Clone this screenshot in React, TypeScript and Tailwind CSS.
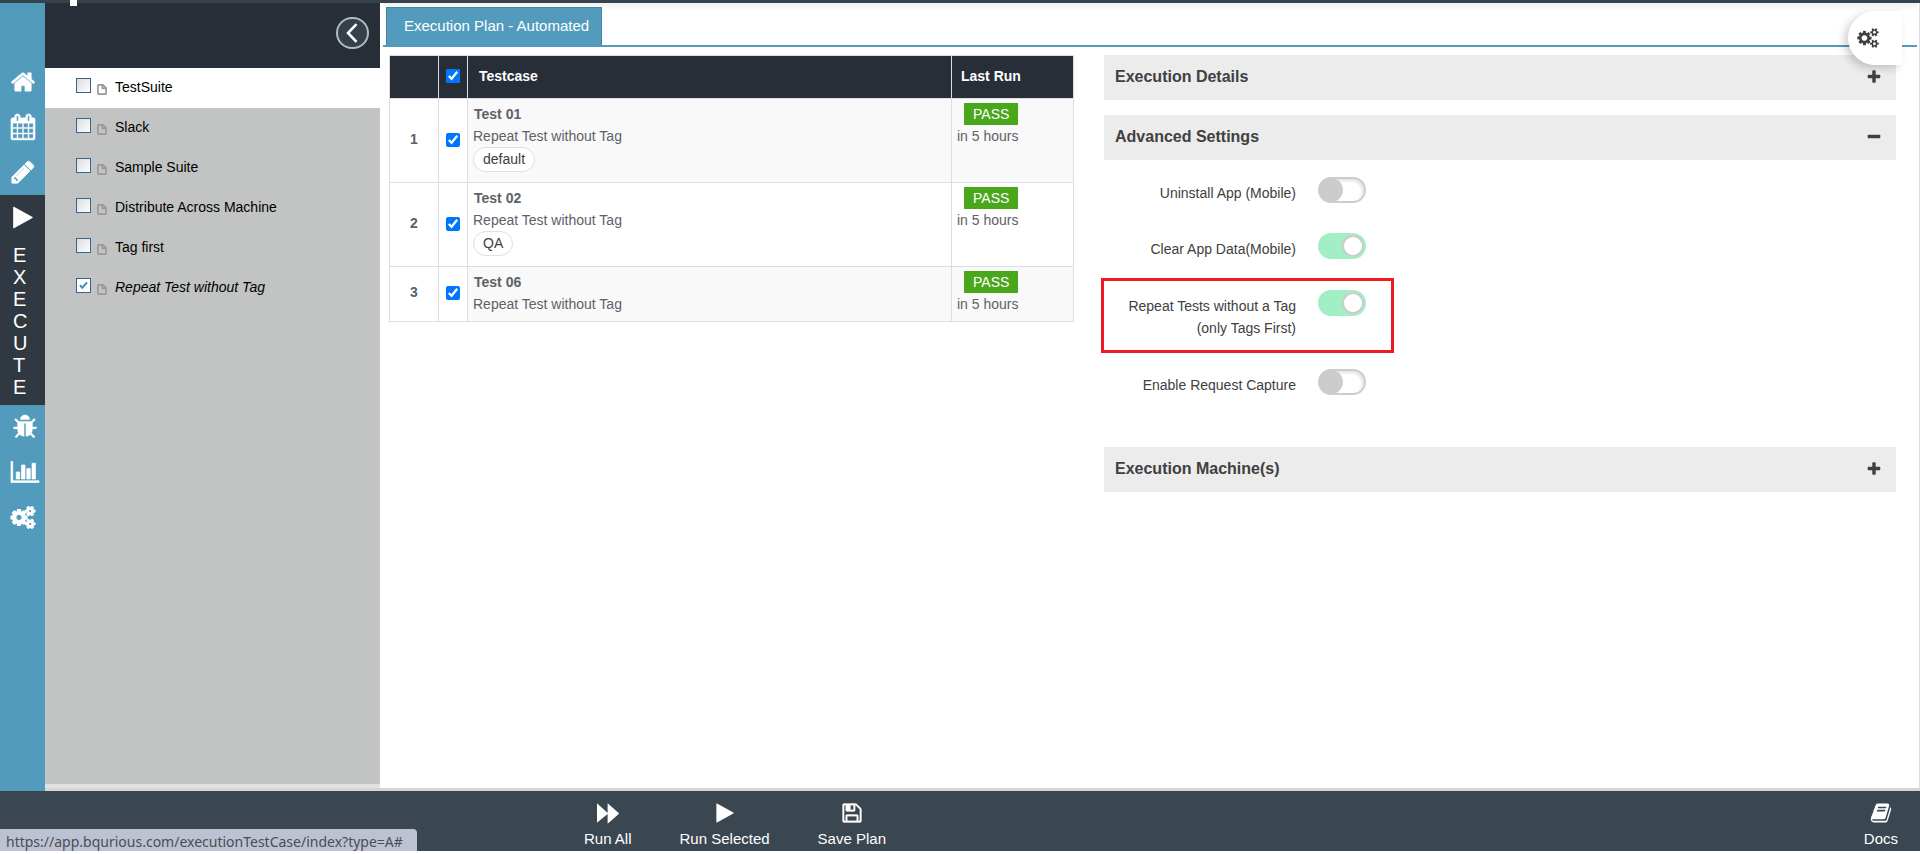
import React, { useState } from "react";

type Glyph = { w: number; d: string; stroke?: number };

const SMALL_GEAR =
  "v140q0 16-149 31-12 27-30 52 51 113 51 138 0 4-4 7-122 71-124 71-8 0-46-47t-52-68q-20 2-30 2t-30-2q-14 21-52 68t-46 47q-2 0-124-71-4-3-4-7 0-25 51-138-18-25-30-52-149-15-149-31v-140q0-16 149-31 13-29 30-52-51-113-51-138 0-4 4-7 4-2 35-20t59-34 30-16q8 0 46 46.5t52 67.5q20-2 30-2t30 2q51-71 92-112l6-2q4 0 124 70 4 3 4 7 0 25-51 138 17 23 30 52 149 15 149 31z";

const GEARS =
  "M896 896q0-106-75-181t-181-75-181 75-75 181 75 181 181 75 181-75 75-181zm768 512q0-52-38-90t-90-38-90 38-38 90q0 53 37.5 90.5t90.5 37.5 90.5-37.5 37.5-90.5zm0-1024q0-52-38-90t-90-38-90 38-38 90q0 53 37.5 90.5t90.5 37.5 90.5-37.5 37.5-90.5zm-384 421v185q0 10-7 19.5t-16 10.5l-155 24q-11 35-32 76 34 48 90 115 7 11 7 20 0 12-7 19-23 30-82.5 89.5t-78.5 59.5q-11 0-21-7l-115-90q-37 19-77 31-11 108-23 155-7 24-30 24h-186q-11 0-20-7.5t-10-17.5l-23-153q-34-10-75-31l-118 89q-7 7-20 7-11 0-21-8-144-133-144-160 0-9 7-19 10-14 41-53t47-61q-23-44-35-82l-152-24q-10-1-17-9.5t-7-19.5v-185q0-10 7-19.5t16-10.5l155-24q11-35 32-76-34-48-90-115-7-11-7-20 0-12 7-20 22-30 82-89t79-59q11 0 21 7l115 90q34-18 77-32 11-108 23-154 7-24 30-24h186q11 0 20 7.5t10 17.5l23 153q34 10 75 31l118-89q8-7 20-7 11 0 21 8 144 133 144 160 0 8-7 19-12 16-42 54t-45 60q23 48 34 82l152 23q10 2 17 10.5t7 19.5zM1920 1338" +
  SMALL_GEAR +
  "M1920 314" +
  SMALL_GEAR;

const GLYPHS: Record<string, Glyph> = {
  home: {
    w: 1792,
    d: "M1472 992v480q0 26-19 45t-45 19h-384v-384h-256v384h-384q-26 0-45-19t-19-45v-480q0-1 .5-3t.5-3l575-474 575 474q1 2 1 6zm223-69l-62 74q-8 9-21 11h-3q-13 0-21-7l-692-577-692 577q-12 8-24 7-13-2-21-11l-62-74q-8-10-7-23.5t11-21.5l719-599q32-26 76-26t76 26l244 204v-195q0-14 9-23t23-9h192q14 0 23 9t9 23v408l219 182q10 8 11 21.5t-7 23.5z",
    stroke: 30,
  },
  calendar: {
    w: 1792,
    d: "M192 1664h288v-288h-288v288zm352 0h320v-288h-320v288zm-352-352h288v-320h-288v320zm352 0h320v-320h-320v320zm-352-384h288v-288h-288v288zm736 736h320v-288h-320v288zm-384-736h320v-288h-320v288zm768 736h288v-288h-288v288zm-384-352h320v-320h-320v320zm-352-864v-288q0-13-9.5-22.5t-22.5-9.5h-64q-13 0-22.5 9.5t-9.5 22.5v288q0 13 9.5 22.5t22.5 9.5h64q13 0 22.5-9.5t9.5-22.5zm736 864h288v-320h-288v320zm-384-384h320v-288h-320v288zm384 0h288v-288h-288v288zm32-480v-288q0-13-9.5-22.5t-22.5-9.5h-64q-13 0-22.5 9.5t-9.5 22.5v288q0 13 9.5 22.5t22.5 9.5h64q13 0 22.5-9.5t9.5-22.5zm384-64v1280q0 52-38 90t-90 38h-1408q-52 0-90-38t-38-90v-1280q0-52 38-90t90-38h128v-96q0-66 47-113t113-47h64q66 0 113 47t47 113v96h384v-96q0-66 47-113t113-47h64q66 0 113 47t47 113v96h128q52 0 90 38t38 90z",
    stroke: 30,
  },
  pencil: {
    w: 1792,
    d: "M491 1536l91-91-235-235-91 91v107h128v128h107zm523-928q0-22-22-22-10 0-17 7l-542 542q-7 7-7 17 0 22 22 22 10 0 17-7l542-542q7-7 7-17zm-54-192l416 416-832 832h-416v-416zm683 96q0 53-37 90l-166 166-416-416 166-165q36-38 90-38 53 0 91 38l235 234q37 39 37 91z",
    stroke: 50,
  },
  play: {
    w: 1792,
    d: "M1576 927l-1328 738q-23 13-39.5 3t-16.5-36v-1472q0-26 16.5-36t39.5 3l1328 738q23 13 23 31t-23 31z",
  },
  bug: {
    w: 1792,
    d: "M1696 960q0 26-19 45t-45 19h-224q0 171-67 290l208 209q19 19 19 45t-19 45q-18 19-45 19t-45-19l-198-197q-5 5-15 13t-42 28.5-65 36.5-82 29-97 13v-896h-128v896q-51 0-101.5-13.5t-87-33-66-39-43.5-32.5l-15-14-183 207q-20 21-48 21-24 0-43-16-19-18-20.5-44.5t15.5-46.5l202-227q-58-114-58-274h-224q-26 0-45-19t-19-45 19-45 45-19h224v-294l-173-173q-19-19-19-45t19-45 45-19 45 19l173 173h844l173-173q19-19 45-19t45 19 19 45-19 45l-173 173v294h224q26 0 45 19t19 45zm-480-576h-640q0-133 93.5-226.5t226.5-93.5 226.5 93.5 93.5 226.5z",
    stroke: 30,
  },
  chart: {
    w: 2048,
    d: "M640 896v512h-256v-512h256zm384-512v1024h-256v-1024h256zm1024 1152v128h-2048v-1536h128v1408h1920zm-640-896v768h-256v-768h256zm384-384v1152h-256v-1152h256z",
    stroke: 50,
  },
  cogs: { w: 1920, d: GEARS },
  cogsBold: { w: 1920, d: GEARS, stroke: 90 },
  save: {
    w: 1792,
    d: "M512 1536h768v-384h-768v384zm896 0h128v-896q0-14-10-38.5t-20-34.5l-281-281q-10-10-34-20t-39-10v416q0 40-28 68t-68 28h-576q-40 0-68-28t-28-68v-416h-128v1280h128v-416q0-40 28-68t68-28h832q40 0 68 28t28 68v416zm-384-928v-320q0-13-9.5-22.5t-22.5-9.5h-192q-13 0-22.5 9.5t-9.5 22.5v320q0 13 9.5 22.5t22.5 9.5h192q13 0 22.5-9.5t9.5-22.5zm640 32v928q0 40-28 68t-68 28h-1344q-40 0-68-28t-28-68v-1344q0-40 28-68t68-28h928q40 0 88 20t76 48l280 280q28 28 48 76t20 88z",
    stroke: 30,
  },
  book: {
    w: 1792,
    d: "M1703 478q40 57 18 129l-275 906q-19 64-76.5 107.5t-122.5 43.5h-923q-77 0-148.5-53.5t-99.5-131.5q-24-67-2-127 0-4 3-27t4-37q1-8-3-21.5t-3-19.5q2-11 8-21t16.5-23.5 16.5-23.5q23-38 45-91.5t30-91.5q3-10 .5-30t-.5-28q3-11 17-28t17-23q21-36 42-92t25-90q1-9-2.5-32t.5-28q4-13 22-30.5t22-22.5q19-26 42.5-84.5t27.5-96.5q1-8-3-25.5t-2-26.5q2-8 9-18t18-23 17-21q8-12 16.5-30.5t15-35 16-36 19.5-32 26.5-23.5 36-11.5 47.5 5.5l-1 3q38-9 51-9h761q74 0 114 56t18 130l-274 906q-36 119-71.5 153.5t-128.5 34.5h-869q-27 0-38 15-11 16-1 43 24 70 144 70h923q29 0 56-15.5t35-41.5l300-987q7-22 5-57 38 15 59 43zm-1064 2q-4 13 2 22.5t20 9.5h608q13 0 25.5-9.5t16.5-22.5l21-64q4-13-2-22.5t-20-9.5h-608q-13 0-25.5 9.5t-16.5 22.5zm-83 256q-4 13 2 22.5t20 9.5h608q13 0 25.5-9.5t16.5-22.5l21-64q4-13-2-22.5t-20-9.5h-608q-13 0-25.5 9.5t-16.5 22.5z",
  },
  plus: {
    w: 1792,
    d: "M1600 736v192q0 40-28 68t-68 28h-416v416q0 40-28 68t-68 28h-192q-40 0-68-28t-28-68v-416h-416q-40 0-68-28t-28-68v-192q0-40 28-68t68-28h416v-416q0-40 28-68t68-28h192q40 0 68 28t28 68v416h416q40 0 68 28t28 68z",
  },
  minus: {
    w: 1792,
    d: "M1600 736v192q0 40-28 68t-68 28h-1216q-40 0-68-28t-28-68v-192q0-40 28-68t68-28h1216q40 0 68 28t28 68z",
  },
  forward: {
    w: 1792,
    d: "M45 1651q-19 19-32 13t-13-32v-1472q0-26 13-32t32 13l820 755v-736q0-26 13-32t32 13l860 755q19 19 19 45t-19 45l-860 755q-19 19-32 13t-13-32v-736z",
  },
};

function Icon({ name, className }: { name: string; className: string }) {
  const g = GLYPHS[name];
  return (
    <svg
      viewBox={`0 0 ${g.w} 1792`}
      className={className}
      fill="currentColor"
      stroke={g.stroke ? "currentColor" : "none"}
      strokeWidth={g.stroke}
      overflow="visible"
      aria-hidden="true"
    >
      <path d={g.d} />
    </svg>
  );
}

function NavLink({ name, label, size }: { name: string; label: string; size: string }) {
  return (
    <a href="#" aria-label={label} className="flex h-[45px] items-center justify-center pb-px text-white">
      <Icon name={name} className={size} />
    </a>
  );
}

function SideNav() {
  return (
    <nav className="flex w-[45px] shrink-0 flex-col bg-[#529bbd] pt-[57px]">
      <NavLink name="home" label="Home" size="h-[26px] w-[26px]" />
      <NavLink name="calendar" label="Plan" size="h-[26px] w-[26px]" />
      <NavLink name="pencil" label="Author" size="h-[26px] w-[26px]" />
      <a href="#" className="flex h-[210px] flex-col bg-[#303941] pt-[10px] pl-[10px] text-white">
        <Icon name="play" className="h-[25px] w-[26px]" />
        <span className="mt-[14px] w-5 pl-[3px] text-[20px] leading-[22px] break-all">EXECUTE</span>
      </a>
      <div className="pl-1">
        <NavLink name="bug" label="Defects" size="h-[26px] w-[26px]" />
      </div>
      <div className="pl-1">
        <NavLink name="chart" label="Reports" size="h-[26px] w-7" />
      </div>
      <NavLink name="cogsBold" label="Settings" size="h-[23px] w-6" />
    </nav>
  );
}

const SUITES = ["TestSuite", "Slack", "Sample Suite", "Distribute Across Machine", "Tag first", "Repeat Test without Tag"];

function SuiteRow({ name, index }: { name: string; index: number }) {
  const [checked, setChecked] = useState(index === 5);
  return (
    <li className={index === 0 ? "bg-white" : ""}>
      <label className="flex h-10 items-center pl-[31px] text-[14px] text-black">
        <span className="relative mb-[5px] h-[15px] w-[15px]">
          <input
            type="checkbox"
            checked={checked}
            onChange={() => setChecked(!checked)}
            className="block h-[15px] w-[15px] appearance-none border border-[#336592] bg-linear-to-br from-[#dcdcdc] to-white checked:from-white"
          />
          {checked && (
            <svg viewBox="0 0 15 15" className="pointer-events-none absolute inset-0 h-[15px] w-[15px]" fill="none" stroke="#3a8fb7" strokeWidth="2">
              <path d="M4 7.2l2.2 2.6L11 4.5" />
            </svg>
          )}
        </span>
        <svg viewBox="0 0 10 11" className="mt-[2px] ml-[6px] h-[11px] w-[10px] text-[#999]" fill="none" stroke="currentColor" strokeWidth="1.7" aria-hidden="true">
          <path d="M1.9.9h4l3.200 3.300v5q0 1-1 1H1.900q-1 0-1-1V1.900q0-1 1-1z" />
          <path d="M5.400.9v3.500h3.700" />
        </svg>
        <span className={index === 5 ? "ml-2 pb-[2px] italic" : "ml-2 pb-[2px]"}>{name}</span>
      </label>
    </li>
  );
}

function SuitePanel() {
  return (
    <aside className="flex w-[335px] shrink-0 flex-col bg-[#c2c4c3]">
      <div className="flex h-[65px] shrink-0 items-start justify-end bg-[#272e37] pt-[14px] pr-[11px]">
        <button type="button" aria-label="Collapse" className="flex h-8 w-[33px] items-center justify-center rounded-full border-2 border-[#b5b9bc] bg-[#34404a]">
          <svg viewBox="0 0 12 20" className="mr-[2px] h-5 w-3" fill="none" stroke="#fff" strokeWidth="2.6">
            <path d="M10.500 1.200L2 10l8.500 8.800" />
          </svg>
        </button>
      </div>
      <ul className="flex-1">
        {SUITES.map((s, i) => (
          <SuiteRow key={s} name={s} index={i} />
        ))}
      </ul>
      <div className="h-1 bg-[#e0e1e0]" />
    </aside>
  );
}

const TESTS = [
  { name: "Test 01", suite: "Repeat Test without Tag", tag: "default" },
  { name: "Test 02", suite: "Repeat Test without Tag", tag: "QA" },
  { name: "Test 06", suite: "Repeat Test without Tag", tag: "" },
];

function TestTable() {
  return (
    <table className="w-full table-fixed border-collapse border border-[#dcdee6] text-[14px] leading-[22px] text-[#5e6166]">
      <colgroup>
        <col className="w-[49px]" />
        <col className="w-[29px]" />
        <col />
        <col className="w-[122px]" />
      </colgroup>
      <thead>
        <tr className="h-[43px] bg-[#272e37] text-left text-white">
          <th className="border border-[#dcdee6]" />
          <th className="border border-[#dcdee6] pb-[2px] text-center">
            <input type="checkbox" defaultChecked aria-label="Select all" className="mx-auto block h-[14px] w-[14px] accent-[#0075ff]" />
          </th>
          <th className="border border-[#dcdee6] pb-[2px] pl-[11px]">Testcase</th>
          <th className="border border-[#dcdee6] pb-[2px] pl-[9px]">Last Run</th>
        </tr>
      </thead>
      <tbody>
        {TESTS.map((t, i) => (
          <tr key={t.name}>
            <th className="border border-[#dcdee6] pb-1 text-center">{i + 1}</th>
            <td className="border border-[#dcdee6] pb-[2px]">
              <input type="checkbox" defaultChecked aria-label={t.name} className="mx-auto block h-[14px] w-[14px] accent-[#0075ff]" />
            </td>
            <td className={`border border-[#dcdee6] px-[5px] pt-1 pb-[6px] align-top ${i % 2 ? "" : "bg-[#f9f9f9]"}`}>
              <div className="pl-px font-bold">{t.name}</div>
              <div>{t.suite}</div>
              {t.tag && (
                <div className="pb-1">
                  <span className="block w-fit rounded-full border border-[#dddfe2] bg-white px-[9px] pb-px leading-[22px] text-[#404040]">{t.tag}</span>
                </div>
              )}
            </td>
            <td className={`border border-[#dcdee6] px-[5px] pt-1 align-top ${i % 2 ? "" : "bg-[#f9f9f9]"}`}>
              <span className="ml-[7px] block w-fit bg-[#48a71b] px-[9px] text-white">PASS</span>
              <div>in 5 hours</div>
            </td>
          </tr>
        ))}
      </tbody>
    </table>
  );
}

function SectionBar({ title, open }: { title: string; open?: boolean }) {
  return (
    <h2>
      <button type="button" aria-expanded={!!open} className="flex h-[45px] w-full items-center justify-between bg-[#ececec] pr-[14px] pb-[2px] pl-[11px] text-[16px] font-bold text-[#404040]">
        {title}
        <Icon name={open ? "minus" : "plus"} className="h-4 w-4" />
      </button>
    </h2>
  );
}

function ToggleRow({ id, label, note, on, marked }: { id: string; label: string; note?: string; on?: boolean; marked?: boolean }) {
  return (
    <div className={`flex items-start gap-[22px] text-[14px] leading-[22px] text-[#404040] ${marked ? "-mt-[11px] mb-4 -ml-[3px] w-[293px] border-3 border-[#ed1c24] pt-[9px] pb-[11px]" : "mb-[30px] h-[26px] w-[290px]"}`}>
      <label htmlFor={id} className="w-[192px] shrink-0 pt-[5px] text-right">
        {label}
        {note && <span className="block">{note}</span>}
      </label>
      <input
        id={id}
        type="checkbox"
        role="switch"
        defaultChecked={on}
        className="relative h-[26px] w-12 appearance-none rounded-full border-2 border-[#ccc] bg-white shadow-[inset_-2px_2px_3px_#e4e4e4] before:absolute before:-top-px before:-left-px before:h-6 before:w-6 before:rounded-full before:bg-[#ccc] checked:border-[#a2efc5] checked:bg-[#a2efc5] checked:shadow-none checked:before:top-0 checked:before:left-[22px] checked:before:h-[22px] checked:before:w-[22px] checked:before:border-2 checked:before:border-[#ccc] checked:before:bg-white"
      />
    </div>
  );
}

function Settings() {
  return (
    <section className="flex flex-col">
      <SectionBar title="Execution Details" />
      <div className="h-[15px]" />
      <SectionBar title="Advanced Settings" open />
      <div className="flex h-[287px] flex-col pt-[17px]">
        <ToggleRow id="uninstall" label="Uninstall App (Mobile)" />
        <ToggleRow id="clear" label="Clear App Data(Mobile)" on />
        <ToggleRow id="repeat" label="Repeat Tests without a Tag" note="(only Tags First)" on marked />
        <ToggleRow id="capture" label="Enable Request Capture" />
      </div>
      <SectionBar title="Execution Machine(s)" />
    </section>
  );
}

function FooterButton({ name, label, size }: { name: string; label: string; size: string }) {
  return (
    <button type="button" className="flex flex-col items-center text-[15px] leading-[22px] text-white">
      <Icon name={name} className={size} />
      <span className="mt-1">{label}</span>
    </button>
  );
}

export default function App() {
  return (
    <div className="flex min-h-screen flex-col bg-white pb-[3px] font-['Liberation_Sans',Arial,sans-serif]">
      <header className="relative h-[3px] bg-[#36424c]">
        <span className="absolute top-0 left-[70px] h-[6px] w-[7px] bg-white" />
      </header>
      <div className="flex flex-1">
        <SideNav />
        <div className="flex flex-1 flex-col border-b-3 border-[#d4d5d5]">
          <div className="flex flex-1">
            <SuitePanel />
            <main className="relative flex-1 border-r border-[#ddd] pr-[2px] pl-[3px]">
              <div className="flex border-b-2 border-[#529bbd] bg-linear-to-b from-[#f1f1f1] to-white to-20% pt-1 pl-[3px]">
                <button type="button" className="h-[38px] border border-b-0 border-[#3f87a9] bg-[#529bbd] pr-3 pb-px pl-[17px] text-[15px] text-white">
                  Execution Plan - Automated
                </button>
              </div>
              <div className="grid grid-cols-[minmax(0,685fr)_minmax(0,792fr)] items-start gap-[30px] pt-2 pr-[21px] pl-[6px]">
                <TestTable />
                <Settings />
              </div>
              <button type="button" aria-label="Options" className="absolute top-2 right-[17px] flex h-[54px] w-[54px] items-center rounded-l-full bg-white pl-[9px] text-[#404040] shadow-[-4px_3px_8px_#00000030]">
                <Icon name="cogs" className="h-5 w-[22px]" />
              </button>
            </main>
          </div>
        </div>
      </div>
      <footer className="flex h-[60px] items-start bg-[#3a4650] pt-[11px] pr-[22px] pl-[584px]">
        <div className="flex flex-1 gap-12">
          <FooterButton name="forward" label="Run All" size="h-[22px] w-[22px]" />
          <FooterButton name="play" label="Run Selected" size="h-[22px] w-[22px]" />
          <FooterButton name="save" label="Save Plan" size="h-[22px] w-6" />
        </div>
        <FooterButton name="book" label="Docs" size="h-[22px] w-[22px]" />
      </footer>
      <div className="fixed bottom-[3px] left-0 h-[22px] rounded-tr bg-[#bdc2d3] pr-[14px] pl-[6px] font-['Noto_Sans',sans-serif] text-[14px] leading-[26px] text-[#4b4d52]">
        https://app.bqurious.com/executionTestCase/index?type=A#
      </div>
    </div>
  );
}
